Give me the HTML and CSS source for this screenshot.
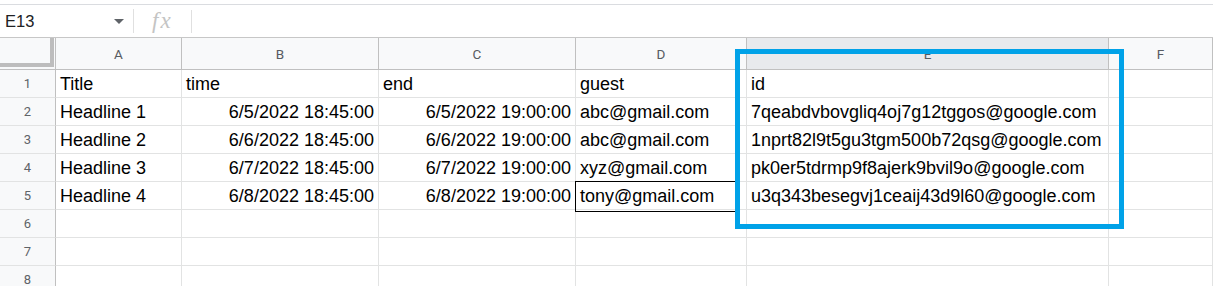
FILE: index.html
```html
<!DOCTYPE html>
<html lang="en">
<head>
    <meta charset="UTF-8">
    <meta name="viewport" content="width=device-width, initial-scale=1.0">
    <title>Events sheet</title>
    <link rel="stylesheet" href="styles.css">
</head>
<body>
    <div class="page">
        <div class="formula-bar">
            <div class="name-box">
                <span class="cell-ref">E13</span>
                <span class="caret"></span>
            </div>
            <div class="fx">fx</div>
            <div class="formula-input"></div>
        </div>

        <div class="sheet">
            <div class="corner"></div>
            <div class="col-head">A</div>
            <div class="col-head">B</div>
            <div class="col-head">C</div>
            <div class="col-head">D</div>
            <div class="col-head active">E</div>
            <div class="col-head">F</div>

            <div class="row-head">1</div>
            <div class="cell">Title</div>
            <div class="cell">time</div>
            <div class="cell">end</div>
            <div class="cell">guest</div>
            <div class="cell">id</div>
            <div class="cell"></div>

            <div class="row-head">2</div>
            <div class="cell">Headline 1</div>
            <div class="cell num">6/5/2022 18:45:00</div>
            <div class="cell num">6/5/2022 19:00:00</div>
            <div class="cell">abc@gmail.com</div>
            <div class="cell">7qeabdvbovgliq4oj7g12tggos@google.com</div>
            <div class="cell"></div>

            <div class="row-head">3</div>
            <div class="cell">Headline 2</div>
            <div class="cell num">6/6/2022 18:45:00</div>
            <div class="cell num">6/6/2022 19:00:00</div>
            <div class="cell">abc@gmail.com</div>
            <div class="cell">1nprt82l9t5gu3tgm500b72qsg@google.com</div>
            <div class="cell"></div>

            <div class="row-head">4</div>
            <div class="cell">Headline 3</div>
            <div class="cell num">6/7/2022 18:45:00</div>
            <div class="cell num">6/7/2022 19:00:00</div>
            <div class="cell">xyz@gmail.com</div>
            <div class="cell">pk0er5tdrmp9f8ajerk9bvil9o@google.com</div>
            <div class="cell"></div>

            <div class="row-head">5</div>
            <div class="cell">Headline 4</div>
            <div class="cell num">6/8/2022 18:45:00</div>
            <div class="cell num">6/8/2022 19:00:00</div>
            <div class="cell boxed">tony@gmail.com</div>
            <div class="cell">u3q343besegvj1ceaij43d9l60@google.com</div>
            <div class="cell"></div>

            <div class="row-head">6</div>
            <div class="cell"></div><div class="cell"></div><div class="cell"></div>
            <div class="cell"></div><div class="cell"></div><div class="cell"></div>

            <div class="row-head">7</div>
            <div class="cell"></div><div class="cell"></div><div class="cell"></div>
            <div class="cell"></div><div class="cell"></div><div class="cell"></div>

            <div class="row-head">8</div>
            <div class="cell"></div><div class="cell"></div><div class="cell"></div>
            <div class="cell"></div><div class="cell"></div><div class="cell"></div>
        </div>

        <div class="highlight"></div>
    </div>
</body>
</html>
```

FILE: styles.css
```css
* {
    box-sizing: border-box;
}

body {
    margin: 0;
    background: white;
    font-family: "Liberation Sans", Arial, sans-serif;
    overflow: hidden;
}

.page {
    position: relative;
    padding-top: 4px;
}

/* formula bar */
.formula-bar {
    display: flex;
    align-items: center;
    height: 34px;
    border-top: 1px solid #dadce0;
    border-bottom: 1px solid #c7c7c7;
}

.name-box {
    display: flex;
    align-items: center;
    width: 134px;
    height: 24px;
    padding-left: 5px;
    border-right: 1px solid #e0e0e0;
}

.cell-ref {
    font-size: 16.5px;
    color: #202124;
    flex: 1;
}

.caret {
    width: 0;
    height: 0;
    margin-right: 9px;
    border-left: 5px solid transparent;
    border-right: 5px solid transparent;
    border-top: 5px solid #5f6368;
}

.fx {
    width: 58px;
    height: 23px;
    padding-left: 18px;
    border-right: 1px solid #e0e0e0;
    font-family: "Liberation Serif", serif;
    font-style: italic;
    font-size: 23px;
    line-height: 21px;
    color: #c4c4c4;
    letter-spacing: 2px;
}

.formula-input {
    flex: 1;
}

/* grid */
.sheet {
    display: grid;
    grid-template-columns: 56px 126px 197px 197px 171px 362px 1fr;
    grid-template-rows: 32px repeat(8, 28px);
}

.corner {
    background: #f8f9fa;
    border-right: 1px solid #c0c0c0;
    border-bottom: 1px solid #c0c0c0;
    box-shadow: inset -1px -2px 0 #f8f9fa, inset -5px -6px 0 #bdbdbd;
}

.col-head {
    display: flex;
    align-items: center;
    justify-content: center;
    background: #f8f9fa;
    border-right: 1px solid #c0c0c0;
    border-bottom: 1px solid #c0c0c0;
    font-family: Roboto, "Liberation Sans", sans-serif;
    font-size: 13.5px;
    color: #575b61;
}

.col-head.active {
    background: #e8eaed;
}

.row-head {
    display: flex;
    align-items: center;
    justify-content: center;
    background: #f8f9fa;
    border-right: 1px solid #c0c0c0;
    border-bottom: 1px solid #e2e3e3;
    font-family: Roboto, "Liberation Sans", sans-serif;
    font-size: 13px;
    color: #5f6368;
}

.cell {
    display: flex;
    align-items: flex-end;
    padding: 0 4px 2px 4px;
    border-right: 1px solid #e2e3e3;
    border-bottom: 1px solid #e2e3e3;
    font-size: 18px;
    color: #000;
    white-space: nowrap;
}

.cell.num {
    justify-content: flex-end;
}

.cell.boxed {
    position: relative;
}

.cell.boxed::after {
    content: "";
    position: absolute;
    left: -1px;
    top: -1px;
    width: 161px;
    height: 29px;
    border: 1px solid #000;
}

/* annotation drawn over the id column */
.highlight {
    position: absolute;
    left: 735px;
    top: 49px;
    width: 389px;
    height: 180px;
    border: 5px solid #00a2e8;
}
```
